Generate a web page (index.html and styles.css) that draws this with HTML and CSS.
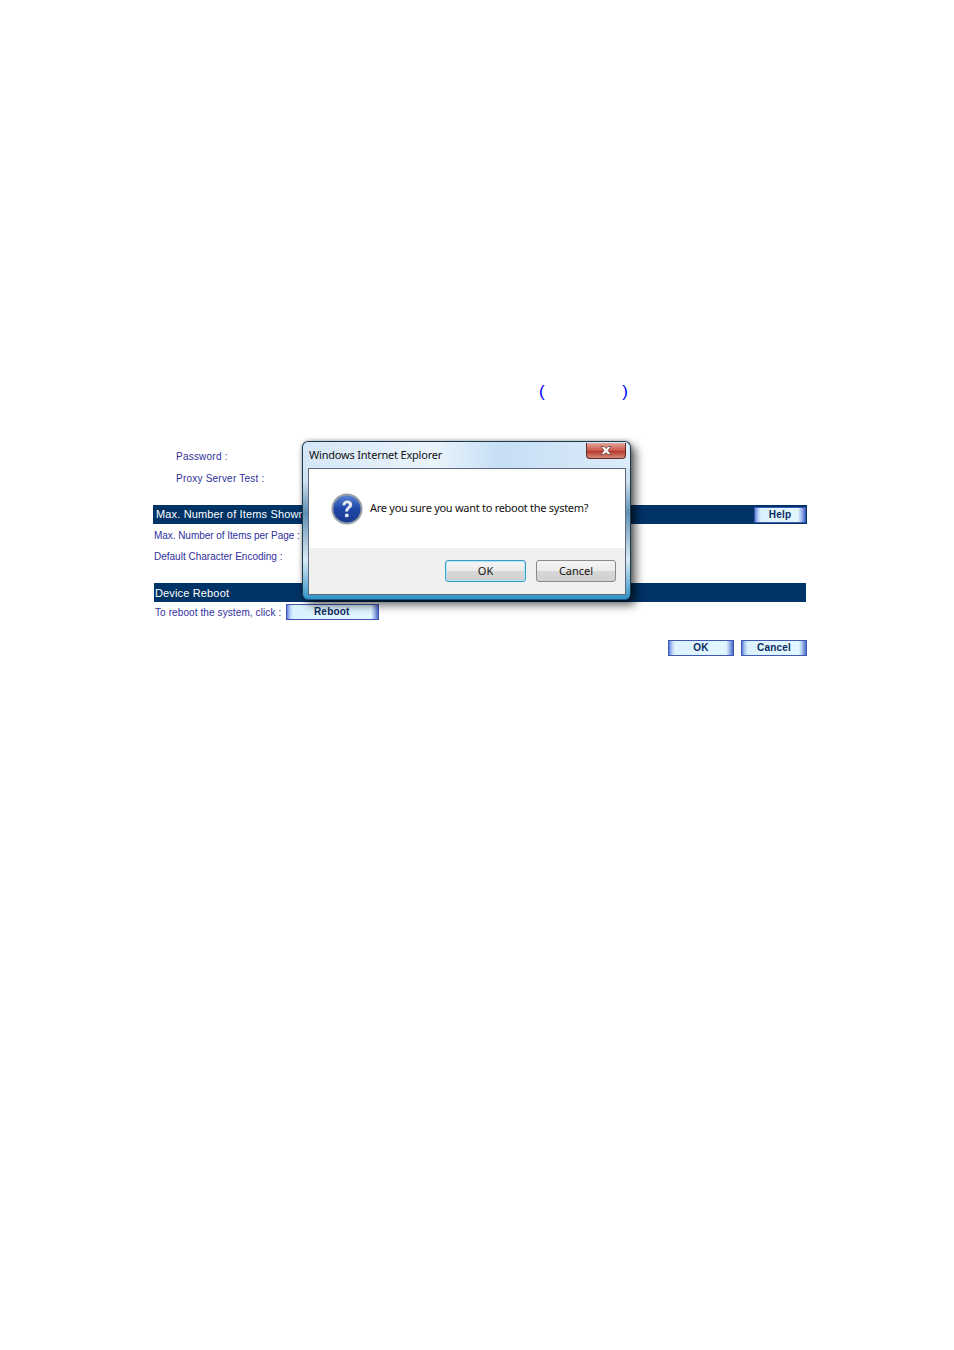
FILE: index.html
```html
<!DOCTYPE html>
<html lang="en">
<head>
    <meta charset="UTF-8">
    <title>Device Reboot</title>
    <link rel="stylesheet" href="styles.css">
</head>
<body>

<div id="page">
    <div id="parens"><span>(</span><span>)</span></div>

    <div id="panel">
        <div class="row indent first">Password :</div>
        <div class="row indent second">Proxy Server Test :</div>

        <div class="bar bar-top">
            <span class="bar-label">Max. Number of Items Shown</span>
            <button class="web-btn help-btn">Help</button>
        </div>
        <div class="row small items-row">Max. Number of Items per Page :</div>
        <div class="row small encoding-row">Default Character Encoding :</div>

        <div class="bar bar-reboot"><span>Device Reboot</span></div>
        <div class="reboot-row">
            <span class="small reboot-label">To reboot the system, click :</span>
            <button class="web-btn reboot-btn">Reboot</button>
        </div>

        <div class="actions">
            <button class="web-btn action-btn">OK</button>
            <button class="web-btn action-btn">Cancel</button>
        </div>
    </div>

    <div id="dialog">
        <div class="dialog-title">Windows Internet Explorer</div>
        <div class="dialog-close">
            <svg width="12" height="9" viewBox="0 0 12 9"><path d="M1 .5h3l2 2 2-2h3L8 4.5l3 4H8l-2-2-2 2H1l3-4z" fill="#fff" stroke="#5a3a38" stroke-width=".7"/></svg>
        </div>
        <div class="dialog-body">
            <div class="dialog-message">
                <svg class="question" width="32" height="32" viewBox="0 0 32 32">
                    <defs>
                        <linearGradient id="ball" x1="0" y1="0" x2="0" y2="1">
                            <stop offset="0" stop-color="#5c86d6"/>
                            <stop offset=".5" stop-color="#1f47a8"/>
                            <stop offset="1" stop-color="#1a3a8c"/>
                        </linearGradient>
                    </defs>
                    <circle cx="16" cy="16" r="14.6" fill="url(#ball)" stroke="#9aa0a8" stroke-width="2"/>
                    <path d="M11.4 12.2c.3-3 2.4-4.6 5-4.6 2.8 0 4.8 1.7 4.8 4.1 0 3.6-4 3.6-4 6.8h-3c0-4.3 3.7-4.6 3.7-6.6 0-1-.7-1.6-1.7-1.6-1.1 0-1.8.8-2 2.2z" fill="#e6ebf5"/>
                    <circle cx="15.8" cy="22.4" r="1.9" fill="#e6ebf5"/>
                </svg>
                <span class="dialog-text">Are you sure you want to reboot the system?</span>
            </div>
            <div class="dialog-footer">
                <button class="vista-btn default">OK</button>
                <button class="vista-btn">Cancel</button>
            </div>
        </div>
    </div>
</div>

</body>
</html>
```

FILE: styles.css
```css
* {
    box-sizing: border-box;
}

body {
    margin: 0;
    background: #fff;
    font-family: "Liberation Sans", Arial, sans-serif;
}

#page {
    position: relative;
    width: 954px;
    height: 1350px;
    padding-top: 382px;
}

#parens {
    display: flex;
    justify-content: space-between;
    width: 89px;
    margin-left: 539px;
    height: 20px;
    color: #0000ff;
    font-size: 17px;
    line-height: 20px;
}

#panel {
    width: 654px;
    margin-left: 153px;
    padding-top: 48px;
    color: #2f2f9c;
}

.row {
    font-size: 10px;
    line-height: 14px;
}

.indent {
    padding-left: 23px;
    letter-spacing: 0.22px;
}

.second {
    margin-top: 8px;
}

.small {
    font-size: 10px;
}

.bar {
    display: flex;
    align-items: center;
    justify-content: space-between;
    height: 19px;
    background: #003366;
    color: #fff;
    font-size: 11px;
    letter-spacing: 0.15px;
}

.bar-top {
    margin-top: 19px;
    padding: 0 1px 0 3px;
}

.bar-label {
    padding-bottom: 2px;
}

.bar-reboot {
    margin: 19px 1px 0 1px;
    padding-left: 1px;
}

.items-row {
    margin-top: 5px;
    padding-left: 1px;
    letter-spacing: -0.05px;
}

.encoding-row {
    margin-top: 7px;
    padding-left: 1px;
}

.reboot-row {
    display: flex;
    align-items: center;
    gap: 5px;
    height: 17px;
    margin-top: 1px;
    padding-left: 2px;
}

.reboot-label {
    padding-top: 2px;
    letter-spacing: 0.1px;
}

.web-btn {
    padding: 0;
    border: 1px solid #3f58b8;
    background: linear-gradient(90deg, #5f7fdc, #b4cdf5 3px, #dcf3ff 6px, #e2f6ff calc(100% - 7px), #a9c3f0 calc(100% - 4px), #4e6cc8);
    color: #0b2a5e;
    font-family: "Liberation Sans", Arial, sans-serif;
    font-size: 10px;
    font-weight: bold;
    letter-spacing: 0.2px;
    line-height: 12px;
}

.help-btn {
    width: 52px;
    height: 16px;
}

.reboot-btn {
    width: 93px;
    height: 16px;
    padding-right: 2px;
}

.actions {
    display: flex;
    justify-content: flex-end;
    gap: 7px;
    margin-top: 20px;
}

.action-btn {
    width: 66px;
    height: 16px;
}

#dialog {
    position: absolute;
    left: 302px;
    top: 441px;
    width: 329px;
    height: 159px;
    padding: 26px 4px 4px 5px;
    border: 1px solid #1c3a4e;
    border-bottom-color: #1a5a80;
    border-radius: 6px;
    background:
        linear-gradient(90deg, #d4e6f6, #eaf4fc 40%, #c6def4 60%, #dcecfa) top / 100% 26px no-repeat,
        linear-gradient(#d4e6f6, #cfe2f2 25%, #5f8fb4 45%, #dcebf5 75%, #2f93c8 100%);
    box-shadow: 5px 5px 10px rgba(0, 0, 0, 0.6), 0 0 4px rgba(0, 0, 0, 0.35);
    font-family: "Noto Sans", "Open Sans", sans-serif;
    color: #111;
}

.dialog-title {
    position: absolute;
    left: 6px;
    top: 5px;
    font-size: 11px;
    letter-spacing: -0.2px;
    line-height: 16px;
}

.dialog-close {
    position: absolute;
    right: 4px;
    top: 1px;
    display: flex;
    align-items: center;
    justify-content: center;
    width: 40px;
    height: 16px;
    border: 1px solid #5e2c28;
    border-top: 0;
    border-radius: 0 0 4px 4px;
    background: linear-gradient(#e3a79c, #c9574a 50%, #b5392c 55%, #d58a7a);
}

.dialog-body {
    height: 127px;
    border: 1px solid #5a6a78;
    background: #fff;
}

.dialog-message {
    display: flex;
    align-items: center;
    gap: 7px;
    height: 79px;
    padding-left: 22px;
    font-size: 11px;
}

.dialog-text {
    margin-bottom: 3px;
    letter-spacing: -0.28px;
}

.question {
    flex: none;
}

.dialog-footer {
    display: flex;
    justify-content: flex-end;
    gap: 10px;
    height: 46px;
    padding: 12px 9px 0 0;
    background: #f0f0f0;
}

.vista-btn {
    width: 80px;
    height: 22px;
    padding: 0;
    border: 1px solid #8a8a8a;
    border-radius: 3px;
    background: linear-gradient(#f4f4f4 0, #ebebeb 50%, #d8d8d8 52%, #cfcfcf 100%);
    color: #111;
    font-family: "Noto Sans", "Open Sans", sans-serif;
    font-size: 11px;
    line-height: 18px;
}

.vista-btn.default {
    width: 81px;
    border-color: #3c9cc8;
    box-shadow: inset 0 0 0 1px #b4e4f6;
}
```
